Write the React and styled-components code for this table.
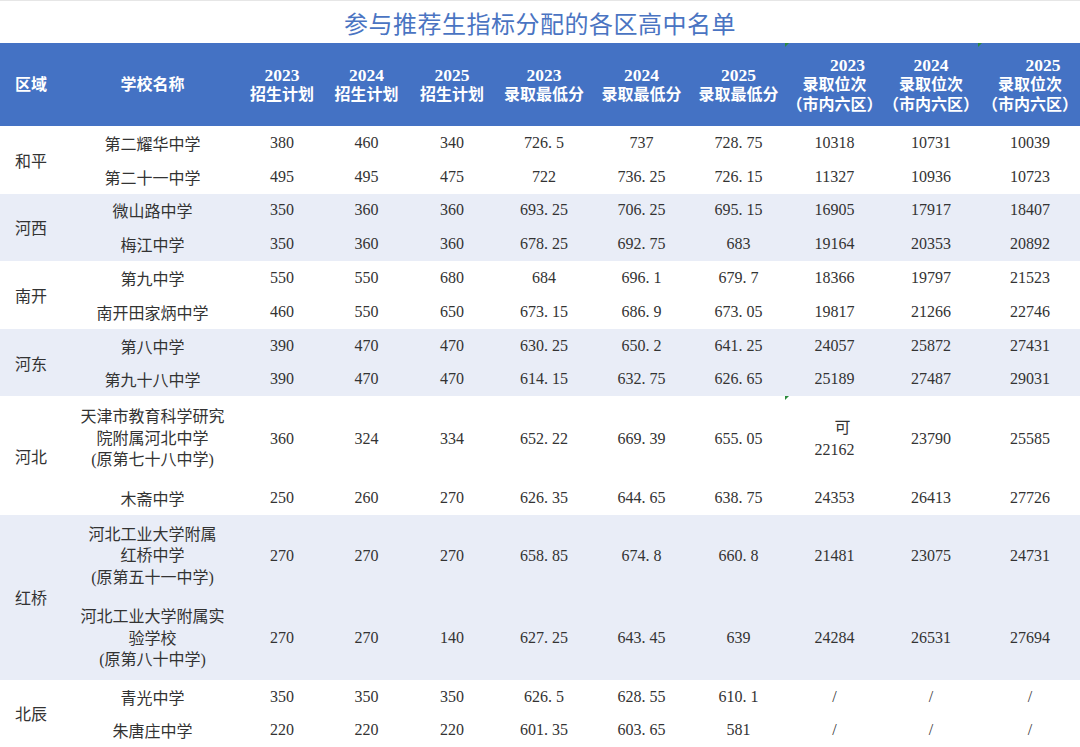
import React from 'react';
import styled, { createGlobalStyle } from 'styled-components';

const Global = createGlobalStyle`
  html, body { margin: 0; padding: 0; background: #fff; }
  body {
    width: 1080px; height: 747px; overflow: hidden;
    font-family: "Liberation Serif", "Noto Sans CJK SC", serif;
  }
`;

const Page = styled.div`
  width: 1080px;
  height: 747px;
  overflow: hidden;
  background: #fff;
`;

const Title = styled.h1`
  margin: 0;
  height: 43px;
  line-height: 43px;
  text-align: center;
  font-family: "Noto Sans CJK SC", sans-serif;
  font-size: 24px;
  font-weight: 400;
  letter-spacing: 0.5px;
  color: #4a74c2;
  border-top: 1px solid #e6e6e6;
  box-sizing: border-box;
`;

const Table = styled.table`
  width: 1080px;
  border-collapse: collapse;
  table-layout: fixed;
`;

const HeadRow = styled.tr`
  height: 83px;
  background: #4472c4;
`;

const HeadCell = styled.th`
  position: relative;
  padding: 0;
  color: #fff;
  font-weight: 700;
  font-size: 16px;
  line-height: 20px;
  vertical-align: middle;
  text-align: ${p => (p.$left ? 'left' : 'center')};
  padding-left: ${p => (p.$left ? '15px' : '0')};
  white-space: nowrap;
`;

const Marker = styled.span`
  position: absolute;
  top: 0;
  left: -2px;
  width: 0;
  height: 0;
  border-top: 4px solid #2b8a3e;
  border-right: 4px solid transparent;
`;

const Stack = styled.div`
  display: flex;
  flex-direction: column;
  align-items: center;
  line-height: ${p => p.$lh || '20px'};
`;

const Line = styled.span`
  display: block;
  white-space: nowrap;
  padding-left: ${p => p.$shift || 0}px;
  font-size: ${p => (p.$num ? '17.5px' : 'inherit')};
`;

const Row = styled.tr`
  height: ${p => p.$h}px;
  background: ${p => (p.$shade ? '#e9edf7' : '#fff')};
`;

const Cell = styled.td`
  position: relative;
  padding: 0;
  font-size: 16px;
  color: #333;
  font-weight: 400;
  vertical-align: middle;
  text-align: ${p => (p.$left ? 'left' : 'center')};
  padding-left: ${p => (p.$left ? '15px' : '0')};
  white-space: nowrap;
`;

const Dot = styled.span`
  display: inline-block;
  width: 8px;
  text-align: left;
`;

const widths = [65, 175, 84, 85, 86, 98, 97, 97, 95, 98, 100];

const heads = [
  { lines: ['区域'], left: true },
  { lines: ['学校名称'] },
  { lines: ['2023', '招生计划'] },
  { lines: ['2024', '招生计划'] },
  { lines: ['2025', '招生计划'] },
  { lines: ['2023', '录取最低分'] },
  { lines: ['2024', '录取最低分'] },
  { lines: ['2025', '录取最低分'] },
  { lines: ['2023', '录取位次', '（市内六区）'], shift: 26, marker: true },
  { lines: ['2024', '录取位次', '（市内六区）'] },
  { lines: ['2025', '录取位次', '（市内六区）'], shift: 26, marker: true },
];

const S = 33.8;

const groups = [
  {
    region: '和平',
    rows: [
      { h: S, name: ['第二耀华中学'], v: ['380', '460', '340', '726.5', '737', '728.75', '10318', '10731', '10039'] },
      { h: S, name: ['第二十一中学'], v: ['495', '495', '475', '722', '736.25', '726.15', '11327', '10936', '10723'] },
    ],
  },
  {
    region: '河西',
    rows: [
      { h: S, name: ['微山路中学'], v: ['350', '360', '360', '693.25', '706.25', '695.15', '16905', '17917', '18407'] },
      { h: S, name: ['梅江中学'], v: ['350', '360', '360', '678.25', '692.75', '683', '19164', '20353', '20892'] },
    ],
  },
  {
    region: '南开',
    rows: [
      { h: S, name: ['第九中学'], v: ['550', '550', '680', '684', '696.1', '679.7', '18366', '19797', '21523'] },
      { h: S, name: ['南开田家炳中学'], v: ['460', '550', '650', '673.15', '686.9', '673.05', '19817', '21266', '22746'] },
    ],
  },
  {
    region: '河东',
    rows: [
      { h: S, name: ['第八中学'], v: ['390', '470', '470', '630.25', '650.2', '641.25', '24057', '25872', '27431'] },
      { h: S, name: ['第九十八中学'], v: ['390', '470', '470', '614.15', '632.75', '626.65', '25189', '27487', '29031'] },
    ],
  },
  {
    region: '河北',
    rows: [
      {
        h: 84.5,
        name: ['天津市教育科学研究', '院附属河北中学', '(原第七十八中学)'],
        v: ['360', '324', '334', '652.22', '669.39', '655.05', { lines: ['可', '22162'], shift: 16, marker: true }, '23790', '25585'],
      },
      { h: S, name: ['木斋中学'], v: ['250', '260', '270', '626.35', '644.65', '638.75', '24353', '26413', '27726'] },
    ],
  },
  {
    region: '红桥',
    rows: [
      {
        h: 82.5,
        name: ['河北工业大学附属', '红桥中学', '(原第五十一中学)'],
        v: ['270', '270', '270', '658.85', '674.8', '660.8', '21481', '23075', '24731'],
      },
      {
        h: 82.5,
        name: ['河北工业大学附属实', '验学校', '(原第八十中学)'],
        v: ['270', '270', '140', '627.25', '643.45', '639', '24284', '26531', '27694'],
      },
    ],
  },
  {
    region: '北辰',
    rows: [
      { h: S, name: ['青光中学'], v: ['350', '350', '350', '626.5', '628.55', '610.1', '/', '/', '/'] },
      { h: S, name: ['朱唐庄中学'], v: ['220', '220', '220', '601.35', '603.65', '581', '/', '/', '/'] },
    ],
  },
];

function Num({ text }) {
  const i = text.indexOf('.');
  if (i < 0) return text;
  return (
    <>
      {text.slice(0, i)}
      <Dot>.</Dot>
      {text.slice(i + 1)}
    </>
  );
}

function Value({ v }) {
  if (typeof v === 'string') return <Num text={v} />;
  return (
    <Stack $lh="22px">
      {v.lines.map((l, i) => (
        <Line key={i} $shift={i === 0 ? v.shift : 0}>{l}</Line>
      ))}
    </Stack>
  );
}

export default function App() {
  return (
    <Page>
      <Global />
      <Title>参与推荐生指标分配的各区高中名单</Title>
      <Table>
        <colgroup>
          {widths.map((w, i) => (
            <col key={i} style={{ width: w }} />
          ))}
        </colgroup>
        <thead>
          <HeadRow>
            {heads.map((h, i) => (
              <HeadCell key={i} $left={h.left}>
                {h.marker && <Marker />}
                {h.left ? (
                  h.lines[0]
                ) : (
                  <Stack>
                    {h.lines.map((l, j) => (
                      <Line key={j} $num={/^\d+$/.test(l)} $shift={j === 0 ? h.shift : 0}>{l}</Line>
                    ))}
                  </Stack>
                )}
              </HeadCell>
            ))}
          </HeadRow>
        </thead>
        <tbody>
          {groups.map((g, gi) =>
            g.rows.map((r, ri) => (
              <Row key={`${gi}-${ri}`} $h={r.h} $shade={gi % 2 === 1}>
                {ri === 0 && (
                  <Cell $left rowSpan={g.rows.length}>
                    {g.region}
                  </Cell>
                )}
                <Cell>
                  {r.name.length === 1 ? (
                    r.name[0]
                  ) : (
                    <Stack $lh="21.5px">
                      {r.name.map((l, i) => (
                        <Line key={i}>{l}</Line>
                      ))}
                    </Stack>
                  )}
                </Cell>
                {r.v.map((v, vi) => (
                  <Cell key={vi}>
                    {typeof v === 'object' && v.marker && <Marker />}
                    <Value v={v} />
                  </Cell>
                ))}
              </Row>
            ))
          )}
        </tbody>
      </Table>
    </Page>
  );
}
